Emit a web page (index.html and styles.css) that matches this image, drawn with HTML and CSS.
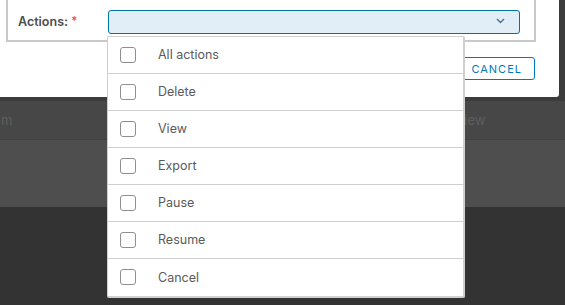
FILE: index.html
```html
<!DOCTYPE html>
<html lang="en">
<head>
  <meta charset="UTF-8" />
  <title>Actions</title>
  <link rel="stylesheet" href="styles.css">
</head>
<body>
  <div class="app">
    <div class="app-top"></div>
    <div class="app-head">
      <span class="col-a">m</span>
      <span class="col-b">View</span>
    </div>
    <div class="app-body"></div>
  </div>

  <div class="modal">
    <div class="form-box">
      <label class="field-label">Actions: <span class="req">*</span></label>
      <div class="select">
        <svg class="chevron" width="9" height="6" viewBox="0 0 9 6">
          <polyline points="1,1 4.5,4.5 8,1" fill="none" stroke="#4a6f93" stroke-width="1.4" />
        </svg>
      </div>
    </div>
    <div class="modal-footer">
      <button class="btn">CANCEL</button>
    </div>
  </div>

  <ul class="dropdown">
    <li><span class="check"></span>All actions</li>
    <li><span class="check"></span>Delete</li>
    <li><span class="check"></span>View</li>
    <li><span class="check"></span>Export</li>
    <li><span class="check"></span>Pause</li>
    <li><span class="check"></span>Resume</li>
    <li><span class="check"></span>Cancel</li>
  </ul>
</body>
</html>
```

FILE: styles.css
```css
* {
  box-sizing: border-box;
  font-family: Inter, 'Liberation Sans', sans-serif;
}
body {
  margin: 0;
  background: #333;
  height: 305px;
  overflow: hidden;
}
.app-top {
  height: 101px;
  background: #3c3c3c;
}
.app-head {
  height: 39px;
  background: #474747;
  border-bottom: 1px solid #414141;
  display: flex;
  align-items: center;
  font-size: 13px;
  color: #5e5e5e;
}
.col-a {
  margin-left: 1px;
}
.col-b {
  margin-left: 443px;
}
.app-body {
  height: 67px;
  background: #4e4e4e;
}
.modal {
  position: absolute;
  top: 0;
  left: 0;
  width: 559px;
  height: 97px;
  background: #fff;
  border-bottom-right-radius: 3px;
  display: flex;
  flex-direction: column;
  padding: 0 24px 0 6px;
}
.form-box {
  height: 42px;
  border: 2px solid #c9c9c9;
  border-top: none;
  width: 530px;
  display: flex;
  padding: 10px 14px 0 10px;
}
.field-label {
  width: 90px;
  font-size: 12.5px;
  font-weight: 600;
  color: #4d4d4d;
  line-height: 21px;
}
.req {
  color: #e8472e;
  font-size: 12px;
  font-weight: 400;
  vertical-align: 1px;
}
.select {
  width: 413px;
  height: 24px;
  background: #e2eef7;
  border: 1px solid #0072a3;
  border-radius: 3px;
  display: flex;
  justify-content: flex-end;
  align-items: center;
  padding-right: 14px;
}
.chevron {
  margin-top: -2px;
}
.modal-footer {
  display: flex;
  justify-content: flex-end;
  margin-top: 15px;
}
.btn {
  height: 23px;
  padding: 0 12px 0 20px;
  background: #fff;
  border: 1px solid #0079b8;
  border-radius: 3px;
  color: #0079b8;
  font-size: 11px;
  letter-spacing: 1px;
  width: 100px;
  text-align: right;
}
.dropdown {
  position: absolute;
  top: 36px;
  left: 107px;
  width: 358px;
  margin: 0;
  padding: 0;
  list-style: none;
  background: #fff;
  border: 1px solid #cfcfcf;
  border-bottom: 2px solid #d0d0d0;
  border-right: 2px solid #d0d0d0;
  border-radius: 2px;
}
.dropdown li {
  height: 37px;
  display: flex;
  align-items: center;
  padding-left: 12px;
  padding-bottom: 1px;
  border-bottom: 1px solid #cfcfcf;
  font-size: 12.5px;
  color: #5a5a5a;
}
.dropdown li:last-child {
  border-bottom: none;
}
.check {
  width: 16px;
  height: 16px;
  border: 1px solid #8f8f8f;
  border-radius: 3px;
  margin-right: 22px;
}
```
